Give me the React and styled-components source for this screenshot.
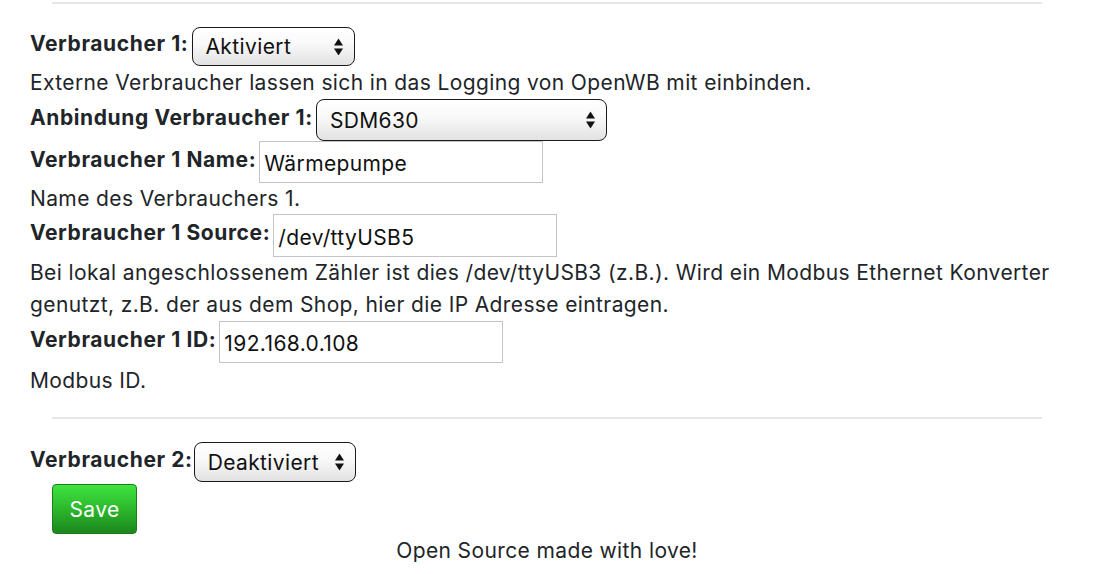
import React from "react";
import styled, { createGlobalStyle } from "styled-components";

const Global = createGlobalStyle`
  html, body { margin: 0; padding: 0; background: #fff; }
  body { font-family: Inter, "Liberation Sans", sans-serif; color: #212529; }
`;

const Page = styled.div`
  width: 1118px;
  height: 574px;
  overflow: hidden;
  display: flex;
  flex-direction: column;
`;

const Section = styled.div`
  display: flex;
  flex-direction: column;
  align-items: flex-start;
  padding-left: 30px;
`;

const Rule = styled.div`
  margin: ${(p) => p.$top}px 0 0 22px;
  width: 990px;
  height: 2px;
  background: #e6e6e6;
`;

const Row = styled.div`
  display: flex;
  align-items: center;
  gap: ${(p) => p.$gap ?? 3}px;
  margin-top: ${(p) => p.$top ?? 0}px;
  height: ${(p) => p.$h}px;
`;

const Label = styled.label`
  font-size: 21px;
  font-weight: 700;
  letter-spacing: 0.6px;
  padding-bottom: 6px;
  white-space: nowrap;
`;

const Help = styled.div`
  font-size: 21px;
  letter-spacing: 0.38px;
  line-height: ${(p) => p.$lh}px;
  margin-top: ${(p) => p.$top ?? 0}px;
  white-space: nowrap;
`;

const SelectWrap = styled.span`
  position: relative;
  display: inline-block;
  height: ${(p) => p.$h}px;
`;

const Select = styled.select`
  appearance: none;
  -webkit-appearance: none;
  box-sizing: border-box;
  width: ${(p) => p.$w}px;
  height: ${(p) => p.$h}px;
  padding: 0 0 0 13px;
  border: 1.5px solid #1a1a1a;
  border-radius: 8px;
  background: linear-gradient(#ffffff 0%, #fafafa 40%, #e2e2e2 100%);
  box-shadow: inset 0 1px 0 #fff;
  font-family: Inter, "Liberation Sans", sans-serif;
  font-size: 21px;
  letter-spacing: 0.38px;
  color: #111;
  outline: none;
`;

const Arrows = styled.svg`
  position: absolute;
  right: 12px;
  top: 50%;
  transform: translateY(-50%);
  pointer-events: none;
`;

const Input = styled.input`
  box-sizing: border-box;
  width: ${(p) => p.$w}px;
  height: ${(p) => p.$h}px;
  padding: 3px 4px 0;
  border: 1px solid #c4c4c4;
  border-radius: 0;
  background: #fff;
  font-family: Inter, "Liberation Sans", sans-serif;
  font-size: 21px;
  letter-spacing: 0.38px;
  color: #111;
  outline: none;
`;

const SaveButton = styled.button`
  margin: 2px 0 0 22px;
  width: 85px;
  height: 50px;
  border: 1px solid #1d7d1d;
  border-radius: 4px;
  background: linear-gradient(#3fe43f 0%, #2cb82c 50%, #1c861c 100%);
  color: #fff;
  font-family: Inter, "Liberation Sans", sans-serif;
  font-size: 21px;
  letter-spacing: 0.38px;
  padding: 0;
`;

const Footer = styled.div`
  text-align: center;
  font-size: 21px;
  letter-spacing: 0.38px;
  line-height: 34px;
  padding-right: 24px;
`;

function Dropdown({ w, h, value }) {
  return (
    <SelectWrap $h={h}>
      <Select $w={w} $h={h} defaultValue={value}>
        <option>{value}</option>
      </Select>
      <Arrows width="9" height="17" viewBox="0 0 9 17">
        <path d="M4.5 0 L9 7 L0 7 Z" fill="#111" />
        <path d="M0 10 L9 10 L4.5 17 Z" fill="#111" />
      </Arrows>
    </SelectWrap>
  );
}

export default function App() {
  return (
    <Page>
      <Global />
      <Section>
        <Rule $top={2} />
        <Row $top={23} $h={39}>
          <Label>Verbraucher 1:</Label>
          <Dropdown w={163} h={39} value="Aktiviert" />
        </Row>
        <Help $lh={33}>Externe Verbraucher lassen sich in das Logging von OpenWB mit einbinden.</Help>
        <Row $h={42}>
          <Label>Anbindung Verbraucher 1:</Label>
          <Dropdown w={291} h={42} value="SDM630" />
        </Row>
        <Row $h={42}>
          <Label>Verbraucher 1 Name:</Label>
          <Input $w={284} $h={42} defaultValue="Wärmepumpe" />
        </Row>
        <Help $lh={31}>Name des Verbrauchers 1.</Help>
        <Row $h={43}>
          <Label>Verbraucher 1 Source:</Label>
          <Input $w={284} $h={43} defaultValue="/dev/ttyUSB5" />
        </Row>
        <Help $lh={32}>
          Bei lokal angeschlossenem Zähler ist dies /dev/ttyUSB3 (z.B.). Wird ein Modbus Ethernet Konverter
          <br />
          genutzt, z.B. der aus dem Shop, hier die IP Adresse eintragen.
        </Help>
        <Row $h={42}>
          <Label>Verbraucher 1 ID:</Label>
          <Input $w={284} $h={42} defaultValue="192.168.0.108" />
        </Row>
        <Help $lh={32} $top={2}>Modbus ID.</Help>
        <Rule $top={20} />
        <Row $top={23} $h={40} $gap={1}>
          <Label>Verbraucher 2:</Label>
          <Dropdown w={162} h={40} value="Deaktiviert" />
        </Row>
        <SaveButton>Save</SaveButton>
      </Section>
      <Footer>Open Source made with love!</Footer>
    </Page>
  );
}
